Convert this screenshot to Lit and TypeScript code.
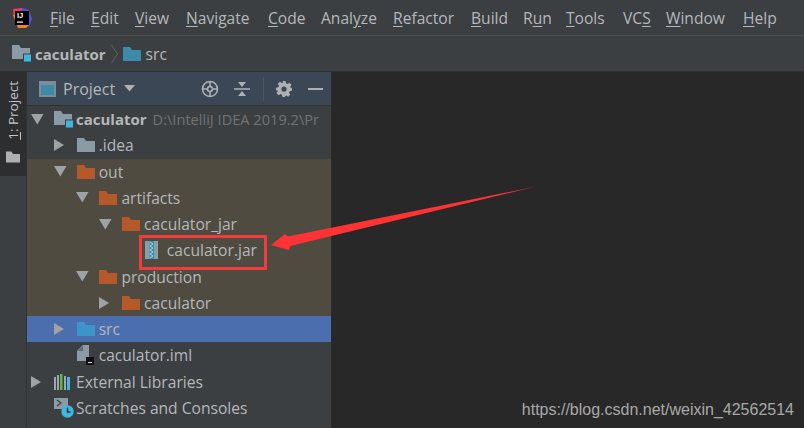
import { LitElement, html, css, svg } from "lit";
import { customElement } from "lit/decorators.js";

const folder = (c: string, w = 18, h = 14) => svg`<svg class="ic" width="${w}" height="${h}" viewBox="0 0 18 14"><path d="M0 0h7l2 3h9v11H0z" fill="${c}"/></svg>`;
const moduleFolder = svg`<svg class="ic" width="19" height="17" viewBox="0 0 19 17"><path d="M0 0h7l2 3h9v11H0z" fill="#8b9ba5"/><rect x="11" y="8.500" width="8" height="8" fill="#3c3f41"/><rect x="12" y="9.500" width="7" height="7" fill="#40b6e0"/></svg>`;
const jar = svg`<svg class="ic" width="14" height="19" viewBox="0 0 14 19"><rect x="0" y="0" width="13" height="18" fill="#8f9ca4"/><rect x="4.500" y="0" width="4.500" height="18" fill="#3a8fa8"/><path d="M5 1l3 2-3 2 3 2-3 2 3 2-3 2 3 2-3 2" fill="none" stroke="#9fd8e8" stroke-width="1"/></svg>`;
const iml = svg`<svg class="ic" width="17" height="20" viewBox="0 0 17 20"><path d="M0 6l6-6h6v16H0z" fill="#8b9ba5"/><path d="M1 6h5V1z" fill="#5c6a72"/><rect x="9" y="12" width="8" height="8" fill="#111"/><rect x="11" y="17" width="4" height="1" fill="#ddd"/></svg>`;
const libs = svg`<svg class="ic" width="18" height="16" viewBox="0 0 18 16"><rect x="0" y="3" width="2" height="13" fill="#9aa7b0"/><rect x="3" y="1" width="2" height="15" fill="#9aa7b0"/><rect x="6" y="0" width="2.500" height="16" fill="#62b543"/><rect x="10" y="2" width="2" height="14" fill="#9aa7b0"/><rect x="13" y="3" width="3" height="13" fill="#40b6e0"/></svg>`;
const scratch = svg`<svg class="ic" width="20" height="20" viewBox="0 0 20 20"><rect x="0" y="0" width="14" height="11" fill="#8b9ba5"/><path d="M3 2l4 3-4 3" fill="none" stroke="#3c3f41" stroke-width="1.200"/><circle cx="13.500" cy="13.500" r="6.200" fill="#40b6e0"/><path d="M13.500 9.500v4.500h3" fill="none" stroke="#1d3c4a" stroke-width="1.400"/></svg>`;

type Row = { t: string; l: number; a?: "d" | "r"; i: any; cls?: string; hint?: string };
const rows: Row[] = [
  { t: "caculator", l: 0, a: "d", i: moduleFolder, cls: "bold", hint: "D:\\IntelliJ IDEA 2019.2\\Pr" },
  { t: ".idea", l: 1, a: "r", i: folder("#8b9ba5") },
  { t: "out", l: 1, a: "d", i: folder("#b5592a"), cls: "ex" },
  { t: "artifacts", l: 2, a: "d", i: folder("#b5592a"), cls: "ex" },
  { t: "caculator_jar", l: 3, a: "d", i: folder("#b5592a"), cls: "ex" },
  { t: "caculator.jar", l: 4, i: jar, cls: "ex" },
  { t: "production", l: 2, a: "d", i: folder("#b5592a"), cls: "ex" },
  { t: "caculator", l: 3, a: "r", i: folder("#b5592a"), cls: "ex" },
  { t: "src", l: 1, a: "r", i: folder("#3d94cb"), cls: "sel" },
  { t: "caculator.iml", l: 1, i: iml },
  { t: "External Libraries", l: 0, a: "r", i: libs },
  { t: "Scratches and Consoles", l: 0, i: scratch },
];

const menus: [string, string, string][] = [
  ["", "F", "ile"], ["", "E", "dit"], ["", "V", "iew"], ["", "N", "avigate"], ["", "C", "ode"],
  ["Anal", "y", "ze"], ["", "R", "efactor"], ["", "B", "uild"], ["R", "u", "n"], ["", "T", "ools"],
  ["VC", "S", ""], ["", "W", "indow"], ["", "H", "elp"],
];
const menuX = [50, 91, 135, 186, 268, 321, 393, 471, 523, 566, 623, 666, 743];

@customElement("app-root")
export class AppRoot extends LitElement {
  static styles = css`
    :host { display: block; position: relative; width: 804px; height: 428px; overflow: hidden; background: #3c3f41; color: #b4b8bb; font: 15.6px "Open Sans", sans-serif; }
    .ic { display: block; flex: none; }
    .menu { height: 35px; display: flex; align-items: center; border-bottom: 1px solid #515151; }
    .logo { width: 50px; flex: none; display: flex; padding-left: 12px; box-sizing: border-box; }
    .items { display: grid; flex: 1; height: 100%; align-items: center; }
    .items u { text-underline-offset: 2px; }
    .crumbs { height: 35px; display: flex; align-items: center; padding-left: 12px; border-bottom: 1px solid #323232; }
    .crumbs b { margin-left: 4px; font-weight: 700; font-size: 15px; }
    .chev { margin: 0 5px 0 5px; }
    .crumbs .src { margin-left: 5px; }
    .main { display: flex; height: 356px; }
    .strip { width: 27px; flex: none; border-right: 1px solid #323232; box-sizing: border-box; }
    .tab { height: 104px; background: #2c2e30; display: flex; flex-direction: column; align-items: center; padding-top: 9px; box-sizing: border-box; gap: 11px; }
    .vt { writing-mode: vertical-rl; transform: rotate(180deg); font-size: 13.5px; line-height: 16px; color: #c4c6c8; }
    .panel { width: 304px; flex: none; border-right: 1px solid #2b2b2b; overflow: hidden; }
    .head { height: 33px; background: #3b4754; border-bottom: 1px solid #323232; display: flex; align-items: center; padding-left: 12px; }
    .head .title { margin-left: 7px; font-size: 16px; }
    .caret { margin-left: 9px; }
    .tools { margin-left: auto; display: flex; align-items: center; }
    .tools svg { display: block; }
    .sep { width: 1px; height: 24px; background: #4c5560; margin: 0 12px 0 13px; }
    .row { height: 26.25px; display: flex; align-items: center; box-sizing: border-box; white-space: nowrap; overflow: hidden; }
    .row.ex { background: #4f4b41; }
    .row.sel { background: #4b6eaf; }
    .arrow { width: 23px; flex: none; }
    .icbox { width: 22px; flex: none; display: flex; align-items: center; }
    .row.bold .name { font-weight: 700; font-size: 15px; }
    .hint { color: #6f7375; margin-left: 6px; font-size: 14.6px; }
    .editor { flex: 1; background: #282828; display: flex; align-items: flex-end; justify-content: flex-end; padding: 0 10px 9px 0; }
    .wm { font: 16px "Liberation Sans", sans-serif; color: #a8a8a8; }
    .box { position: absolute; left: 139px; top: 235px; width: 128px; height: 35px; box-sizing: border-box; border: 3px solid #f03c3c; }
    .overlay { position: absolute; left: 0; top: 0; }
  `;

  render() {
    return html`
      <div class="menu">
        <div class="logo">
          <svg width="20" height="22" viewBox="0 0 20 22">
            <path d="M1 2L10 1l1 10H2z" fill="#f0386b"/>
            <path d="M10 1l7 2 3 9-3 8-6-9z" fill="#4a55d8"/>
            <path d="M1 8l5 13h8l3-3L6 6z" fill="#fc801d"/>
            <rect x="3" y="4" width="14" height="14" fill="#000"/>
            <text x="5" y="11" font-size="7.500" font-weight="700" font-family="Liberation Sans" fill="#fff">IJ</text>
            <rect x="5" y="14.500" width="6" height="1.200" fill="#fff"/>
          </svg>
        </div>
        <div class="items" style="grid-template-columns:${menuX.map((x, i) => (i < menuX.length - 1 ? menuX[i + 1] - x : 61) + "px").join(" ")}">
          ${menus.map(([a, b, c]) => html`<span>${a}<u>${b}</u>${c}</span>`)}
        </div>
      </div>
      <div class="crumbs">
        ${moduleFolder}
        <b>caculator</b>
        <svg class="chev" width="7" height="18" viewBox="0 0 7 18"><path d="M0.500 0l6 9-6 9" fill="none" stroke="#5e6163"/></svg>
        ${folder("#3d8bab")}
        <span class="src">src</span>
      </div>
      <div class="main">
        <div class="strip">
          <div class="tab">
            <span class="vt"><u>1</u>: Project</span>
            ${folder("#aeb1b3", 14, 12)}
          </div>
        </div>
        <div class="panel">
          <div class="head">
            <svg class="ic" width="17" height="16" viewBox="0 0 17 16"><rect width="17" height="16" fill="#7f8b95"/><rect x="2" y="4" width="13" height="10" fill="#3d8bab"/></svg>
            <span class="title">Project</span>
            <svg class="caret" width="12" height="7" viewBox="0 0 12 7"><path d="M0 0h11L5.500 6.500z" fill="#aeb1b3"/></svg>
            <div class="tools">
              <svg width="18" height="18" viewBox="0 0 18 18"><g fill="none" stroke="#aeb1b3" stroke-width="1.600"><circle cx="9" cy="9" r="7.500"/><circle cx="9" cy="9" r="2.500"/><path d="M9 1v5M9 12v5M1 9h5M12 9h5"/></g></svg>
              <svg style="margin-left:15px" width="16" height="16" viewBox="0 0 16 16"><path d="M0 8h16" stroke="#aeb1b3" stroke-width="1.500"/><path d="M4 1h8L8 6zM4 15h8l-4-5z" fill="#aeb1b3"/></svg>
              <div class="sep"></div>
              <svg width="16" height="16" viewBox="0 0 16 16"><path fill="#aeb1b3" fill-rule="evenodd" d="M6.500 0h3l.5 2.300 1.500.7 2-1.200 2 2-1.200 2 .7 1.500L16 6.800v3l-2.300.5-.7 1.500 1.200 2-2 2-2-1.200-1.500.7L9.500 16h-3l-.5-2.300-1.500-.7-2 1.200-2-2 1.200-2-.7-1.500L0 9.800v-3l2.300-.5.7-1.500-1.200-2 2-2 2 1.200 1.500-.7zM8 5.500a2.600 2.600 0 100 5.200 2.600 2.600 0 000-5.200z"/></svg>
              <svg style="margin:0 8px 0 16px" width="15" height="2" viewBox="0 0 15 2"><rect width="15" height="2" fill="#aeb1b3"/></svg>
            </div>
          </div>
          ${rows.map(
            (r) => html`<div class="row ${r.cls ?? ""}" style="padding-left:${4 + r.l * 22.7}px">
              <span class="arrow">${r.a === "d"
                ? svg`<svg class="ic" width="13" height="11" viewBox="0 0 13 11"><path d="M0 0h12.500L6.300 10.500z" fill="#a0a3a5"/></svg>`
                : r.a === "r"
                ? svg`<svg class="ic" width="10" height="12" viewBox="0 0 10 12"><path d="M0 0l10 6-10 6z" fill="#a0a3a5"/></svg>`
                : ""}</span>
              <span class="icbox">${r.i}</span>
              <span class="name">${r.t}</span>
              ${r.hint ? html`<span class="hint">${r.hint}</span>` : ""}
            </div>`
          )}
        </div>
        <div class="editor"><span class="wm">https://blog.csdn.net/weixin_42562514</span></div>
      </div>
      <div class="box"></div>
      <svg class="overlay" width="804" height="428" viewBox="0 0 804 428">
        <path d="M271 245L285 234 288 236.500 536 186.500 290 246 289 250z" fill="#f33"/>
      </svg>
    `;
  }
}
